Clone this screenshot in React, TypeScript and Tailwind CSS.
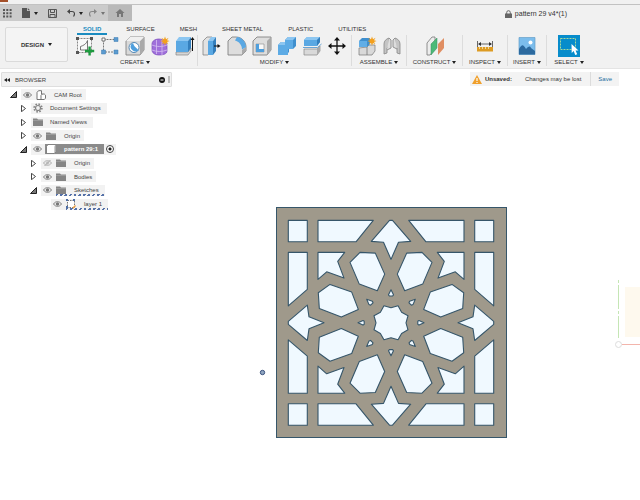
import React from "react";

type IconProps = { children: React.ReactNode; size?: string; box?: string };

function Svg({ children, size = "size-5", box = "0 0 20 20" }: IconProps) {
  return (
    <svg viewBox={box} className={`${size} shrink-0`} fill="none" aria-hidden="true">
      {children}
    </svg>
  );
}

const Caret = () => (
  <svg viewBox="0 0 4 3" className="h-[3px] w-1 shrink-0" aria-hidden="true">
    <path d="M0 0h4L2 3z" fill="#222" />
  </svg>
);

const Spark = ({ x, y }: { x: number; y: number }) => (
  <path
    transform={`translate(${x} ${y})`}
    d="M0-4.4 1-1.8 3.6-3.2 2-.8 4.6 0 2 .9 3.4 3.3 1 2 0 4.4-1 2-3.4 3.3-2 .9-4.6 0-2-.8-3.6-3.2-1-1.8z"
    fill="#f3a01e"
  />
);

const icons = {
  sketch: (
    <Svg>
      <path d="M2.5 2.5h14v14h-14z" stroke="#888" strokeDasharray="2 1" fill="#f8f8f8" />
      <path d="M5.5 14v-3.500C8.500 9.500 11.500 8 12.500 4.500V14z" stroke="#555" strokeWidth=".8" />
      <path d="M1 1h3v3H1zM15 1h3v3h-3zM1 15h3v3H1z" fill="#555" />
      <path d="M14.6 10.5v9M10 15h9.2" stroke="#1d9a3f" strokeWidth="2.4" />
    </Svg>
  ),
  form: (
    <Svg>
      <path d="M3.5 3.5h12M3.5 3.5v12M5 16h10" stroke="#777" strokeDasharray="2 1" />
      <path d="M2 2h3v3H2z" fill="#fff" stroke="#555" strokeWidth=".8" />
      <path d="M14 1.500h4v4h-4zM1.500 14h4v4h-4zM14 14h4v4h-4z" fill="#5b9bd0" stroke="#3f7db2" strokeWidth=".5" />
    </Svg>
  ),
  hole: (
    <Svg>
      <path d="M1 5 5 1h14v13l-4 5H1z" fill="#d9d9d9" stroke="#858585" strokeWidth=".9" />
      <path d="m15 5 4-4v13l-4 5z" fill="#aaa" />
      <path d="M1 5 5 1h14l-4 4z" fill="#f0f0f0" />
      <circle cx="9" cy="11.500" r="5" fill="#fff" stroke="#5488b5" />
      <path d="M6 8.500a5 5 0 0 0 7.500 6C12 12 9 11 8 7z" fill="#4f9fdd" />
    </Svg>
  ),
  sphere: (
    <Svg>
      <path d="M2 8c0-3 3-5 7-5s8 3 8 7v5c0 3-4 4-8 4s-7-2-7-5z" fill="#9f6fda" stroke="#7b4cbd" strokeWidth=".7" />
      <path d="M2 9c5 2 10 2 15 0M2 14c5 2 10 2 15 0M6.500 4v14M12 4v15" stroke="#d6bff1" strokeWidth=".8" />
      <Spark x={15} y={5} />
    </Svg>
  ),
  extrude: (
    <Svg>
      <path d="M1 16h12l3-4v3l-3 4H1z" fill="#d5d5d5" stroke="#777" strokeWidth=".6" />
      <path d="M1 5h12v11H1z" fill="#5aa8e3" />
      <path d="m1 5 3-4h12l-3 4z" fill="#8cc6f1" />
      <path d="m13 5 3-4v11l-3 4z" fill="#347fbd" />
      <path d="M17.500 3v12" stroke="#111" />
      <path d="m15.500 4 2-3 2 3z" fill="#111" />
    </Svg>
  ),
  press: (
    <Svg>
      <path d="M1 5 5 1h5v14l-4 4H1z" fill="#e2e2e2" stroke="#777" strokeWidth=".7" />
      <path d="M6 5h5v14H6z" fill="#5aa8e3" />
      <path d="m6 5 3-4h5l-3 4z" fill="#8cc6f1" />
      <path d="m11 5 3-4v14l-3 4z" fill="#347fbd" />
      <path d="M12 10h5" stroke="#111" />
      <path d="m15.500 8 3 2-3 2z" fill="#111" />
    </Svg>
  ),
  fillet: (
    <Svg>
      <path d="M1 19V5l4-4h4c6 0 10 5 10 10v4l-4 4z" fill="#ddd" stroke="#777" strokeWidth=".8" />
      <path d="M15 19v-5l4-3v4z" fill="#aaa" />
      <path d="M8 4.500 10 1c5 .500 9 5 9 10l-4 2.500C15 9 12 5.500 8 4.500z" fill="#5aa8e3" />
    </Svg>
  ),
  shell: (
    <Svg>
      <path d="M1 5 5 1h14v13l-4 5H1z" fill="#dedede" stroke="#777" strokeWidth=".8" />
      <path d="m15 5 4-4v13l-4 5z" fill="#aaa" />
      <path d="M4 8h8v8H4z" fill="#f9f9f9" stroke="#888" strokeWidth=".6" />
      <path d="M4 8h3v5h5v3H4z" fill="#4f9fdd" />
    </Svg>
  ),
  combine: (
    <Svg>
      <path d="m1 9 3-3h4V4l3-3h8v9l-3 3h-4v3l-3 3H1z" fill="#3f8fce" />
      <path d="M8 4h8v9h-5v6H1V9h7z" fill="#5dabe5" />
      <path d="m8 4 3-3h8l-3 3zM1 9l3-3h4v3z" fill="#8cc6f1" />
    </Svg>
  ),
  split: (
    <Svg>
      <path d="m2 4 3-3h13v5l-3 4H2z" fill="#5aa8e3" />
      <path d="m2 4 3-3h13l-3 3z" fill="#8cc6f1" />
      <path d="m15 4 3-3v5l-3 4z" fill="#347fbd" />
      <path d="M1 11.500h14.500l4-3.500" stroke="#5a9bd0" strokeWidth=".9" />
      <path d="M2 13h13l3-3v5l-3 4H2z" fill="#d9d9d9" stroke="#888" strokeWidth=".7" />
      <path d="m15 13 3-3v5l-3 4z" fill="#aaa" />
    </Svg>
  ),
  move: (
    <Svg>
      <path d="M10 3v14M3 10h14" stroke="#111" strokeWidth="1.300" />
      <path d="m7 4.500 3-3.500 3 3.500zM7 15.500l3 3.500 3-3.500zM4.500 7 1 10l3.500 3zM15.500 7l3.500 3-3.500 3z" fill="#111" />
    </Svg>
  ),
  component: (
    <Svg>
      <path d="m2 12 8-1 2-2h6v6l-3 4H2z" fill="#d9d9d9" stroke="#777" strokeWidth=".7" />
      <path d="M10 11v8" stroke="#777" strokeWidth=".8" />
      <path d="m2 5 3-3h8v6l-3 3H2z" fill="#3f8fce" />
      <path d="M2 5h8v6H2z" fill="#62aee6" />
      <Spark x={15} y={5} />
    </Svg>
  ),
  joint: (
    <Svg>
      <path d="M2 8c0-3 2-5 5-6v9l-2 1v5l-3 1zM18 8c0-3-2-5-5-6v9l2 1v5l3 1z" fill="#c4c4c4" stroke="#888" strokeWidth=".8" />
      <path d="M7 2 9 4v8l-4 2M13 2l-2 2v7l4 2" stroke="#888" strokeWidth=".9" fill="#ddd" />
    </Svg>
  ),
  plane: (
    <Svg>
      <path d="M2 7 7 1h3v12l-5 6H2z" fill="#ededed" stroke="#777" strokeWidth=".8" />
      <path d="m6 8 6-6v10l-6 7z" fill="#4cba78" stroke="#3a8e5c" strokeWidth=".5" />
      <path d="m13 8 6-6v10l-6 7z" fill="#e08e62" />
    </Svg>
  ),
  ruler: (
    <Svg>
      <path d="M2.500 5v6M17.500 5v6M4 8h12" stroke="#444" strokeWidth=".8" />
      <path d="M6 6 3 8l3 2zM14 6l3 2-3 2z" fill="#333" />
      <path d="M2 11h16v4.500H2z" fill="#dd9b23" />
      <path d="M4.500 11v2M7.500 11v2M10.500 11v2M13.500 11v2" stroke="#fff0c8" strokeWidth=".7" />
    </Svg>
  ),
  image: (
    <Svg>
      <path d="M2 1.500h16v17H2z" fill="#7cbdec" stroke="#669fc9" strokeWidth=".7" />
      <circle cx="13.500" cy="6.500" r="2" fill="#fff" />
      <path d="M2 13c3-5 4-5 7 0 3-3 4-3 5-1l4 3v3.500H2z" fill="#2c6a9f" />
    </Svg>
  ),
  select: (
    <Svg size="size-[22px]" box="0 0 22 22">
      <path d="M0 0h22v22H0z" fill="#078ccb" />
      <path d="M2.500 3.500h15v11h-15z" stroke="#a8d99c" strokeDasharray="2 1" />
      <path d="m13.500 9 .2 9 2-2 1.500 4 2-.8-1.600-3.700h2.900z" fill="#fff" />
    </Svg>
  ),
};

type Group = { name: string; width: string; tools: [string, React.ReactNode][] };

const groups: Group[] = [
  {
    name: "CREATE",
    width: "w-[125px]",
    tools: [["Create sketch", icons.sketch], ["Create form", icons.form], ["Hole", icons.hole], ["Sphere", icons.sphere], ["Extrude", icons.extrude]],
  },
  {
    name: "MODIFY",
    width: "w-[154px]",
    tools: [["Press pull", icons.press], ["Fillet", icons.fillet], ["Shell", icons.shell], ["Combine", icons.combine], ["Split", icons.split], ["Move", icons.move]],
  },
  { name: "ASSEMBLE", width: "w-[55px]", tools: [["New component", icons.component], ["Joint", icons.joint]] },
  { name: "CONSTRUCT", width: "w-[56px]", tools: [["Offset plane", icons.plane]] },
  { name: "INSPECT", width: "w-[45px]", tools: [["Measure", icons.ruler]] },
  { name: "INSERT", width: "w-[39px]", tools: [["Insert image", icons.image]] },
  { name: "SELECT", width: "w-[44px]", tools: [["Select", icons.select]] },
];

const tabs = ["SOLID", "SURFACE", "MESH", "SHEET METAL", "PLASTIC", "UTILITIES"];

function TitleBar() {
  return (
    <header>
      <div className="h-1 bg-[#f1f1f1]">
        <div className="h-[2px] w-2 bg-[#a4502a]" />
      </div>
      <div className="flex h-[17px] justify-between border-t border-[#c2c2c2] bg-[#f1f1f1]">
        <div className="flex items-center bg-[#cbcbcb] text-[#555]">
          <button aria-label="Data panel" className="ml-[3px]">
            <Svg size="size-[9px]" box="0 0 9 9">
              <path d="M0 0h2v2H0zM3.300 0h2v2h-2zM6.600 0h2v2h-2zM0 3.300h2v2H0zM3.300 3.300h2v2h-2zM6.600 3.300h2v2h-2zM0 6.600h2v2H0zM3.300 6.600h2v2h-2zM6.600 6.600h2v2h-2z" fill="#555" />
            </Svg>
          </button>
          <button aria-label="File" className="ml-[10px] flex items-center gap-1">
            <Svg size="h-[10px] w-2" box="0 0 8 10">
              <path d="M0 0h5v3h3v7H0zM5.800 0 8 2.200H5.800z" fill="#555" />
            </Svg>
            <Caret />
          </button>
          <button aria-label="Save document" className="ml-[10px]">
            <Svg size="size-[9px]" box="0 0 9 9">
              <path d="M.5.5h8v8h-8z" stroke="#555" />
              <path d="M2.500.5v3h4v-3M2 8.500v-3h5v3" stroke="#555" />
            </Svg>
          </button>
          <button aria-label="Undo" className="ml-[10px] flex items-center gap-1">
            <Svg size="size-2" box="0 0 8 8">
              <path d="M2 2.500h3c3 0 3 3 1.500 5" stroke="#444" strokeWidth="1.200" />
              <path d="M3 0v5L0 2.500z" fill="#444" />
            </Svg>
            <Caret />
          </button>
          <button aria-label="Redo" className="ml-[6px] flex items-center gap-1 opacity-50">
            <Svg size="size-2" box="0 0 8 8">
              <path d="M6 2.500H3c-3 0-3 3-1.500 5" stroke="#444" strokeWidth="1.200" />
              <path d="M5 0v5l3-2.500z" fill="#444" />
            </Svg>
            <Caret />
          </button>
          <button aria-label="Home" className="ml-[3px] flex h-full w-6 items-center justify-center bg-[#b9b9b9]">
            <Svg size="size-[10px]" box="0 0 10 10">
              <path d="M5 1 .5 5H2v4h2V6h2v3h2V5h1.500z" fill="#777" />
            </Svg>
          </button>
        </div>
        <h1 className="flex items-center gap-[3px] pt-px pr-[73px] text-[7px] leading-[8px] text-[#333]">
          <Svg size="h-2 w-[7px]" box="0 0 7 8">
            <path d="M1.700 4V2.500a1.800 1.800 0 0 1 3.600 0V4" stroke="#666" />
            <path d="M0 3.500h7V8H0z" fill="#666" />
          </Svg>
          pattern 29 v4*(1)
        </h1>
      </div>
    </header>
  );
}

function Ribbon() {
  return (
    <div className="flex border-b border-[#e4e4e4] bg-[#f1f1f1] text-[#333]">
      <div className="w-[73px] shrink-0 pt-[6px] pl-[5px]">
        <button className="flex h-[35px] w-[63px] items-center justify-center gap-1 rounded-[2px] border border-[#dadada] bg-[#f4f4f4] font-bold">
          DESIGN <Caret />
        </button>
      </div>
      <div className="min-w-0 flex-1">
        <nav className="flex gap-[25px] pl-1">
          {tabs.map((t, i) => (
            <button
              key={t}
              className={
                i === 0
                  ? "-mr-[6px] border-b-2 border-[#1a8bc0] px-[6px] pt-1 font-bold text-[#1a8bc0]"
                  : "border-b-2 border-transparent pt-1 whitespace-nowrap"
              }
            >
              {t}
            </button>
          ))}
        </nav>
        <div className="flex pb-[2px]">
          {groups.map((g) => (
            <section key={g.name} className={`${g.width} flex shrink-0 flex-col items-center border-r border-[#dcdcdc] last:border-r-0`}>
              <div className="flex h-[22px] items-center justify-center gap-[5px]">
                {g.tools.map(([name, icon]) => (
                  <button key={name} aria-label={name} className="shrink-0">
                    {icon}
                  </button>
                ))}
              </div>
              <button className="mt-px flex items-center gap-[2px]">
                {g.name} <Caret />
              </button>
            </section>
          ))}
        </div>
      </div>
    </div>
  );
}

const Eye = ({ off = false }: { off?: boolean }) => (
  <button aria-label="Toggle visibility">
    <Svg size="h-2 w-[9px]" box="0 0 9 8">
      <path d="M.5 4C2.500.8 6.500.8 8.500 4 6.500 7.200 2.500 7.200.5 4z" stroke={off ? "#b5b5b5" : "#858585"} fill="#e8e8e8" />
      <circle cx="4.500" cy="4" r="1.700" fill={off ? "#c5c5c5" : "#777"} />
      {off && <path d="M1.500 7 7.500 1" stroke="#aaa" />}
    </Svg>
  </button>
);

const Folder = () => (
  <Svg size="h-2 w-[10px]" box="0 0 10 8">
    <path d="M0 .5h4l1 1h5V8H0z" fill="#858585" />
    <path d="M0 2.500h10" stroke="#aaa" strokeWidth=".6" />
  </Svg>
);

const Gear = () => (
  <Svg size="size-[10px]" box="0 0 10 10">
    <circle cx="5" cy="5" r="3.900" stroke="#858585" strokeWidth="1.600" strokeDasharray="1.600 1.460" />
    <circle cx="5" cy="5" r="2.500" stroke="#858585" strokeWidth="1.200" />
  </Svg>
);

const Root = () => (
  <Svg size="size-[10px]" box="0 0 10 10">
    <path d="M1 2.500 2.500.7h3V4h2.800L9.500 5.200v3L8.300 9.500H1zM5 9.500V5.500L6.300 4" stroke="#666" strokeWidth=".9" fill="#fff" />
  </Svg>
);

const Cube = () => (
  <Svg size="size-[10px]" box="0 0 10 10">
    <path d="M.5 2.500 2 .5h7.500v7L8 9.500H.5z" fill="#fff" stroke="#666" strokeWidth=".7" />
    <path d="M8 2.500v7l1.500-2v-7z" fill="#ccc" />
  </Svg>
);

const SketchSmall = () => (
  <Svg size="size-[10px]" box="0 0 10 10">
    <path d="M1.500 1.500h7v7h-7z" stroke="#777" strokeDasharray="1.500 1" fill="#fff" />
    <path d="M0 0h2v2H0zM7 0h2v2H7zM0 7h2v2H0z" fill="#4d6ea5" />
    <path d="m6 9 3-3 1 1-3 3z" fill="#eb9c3d" />
  </Svg>
);

type Node = {
  label: string;
  indent: string;
  state?: "open" | "closed";
  eye?: "on" | "off";
  icon: React.ReactNode;
  kind?: "active" | "sketch";
};

const nodes: Node[] = [
  { label: "CAM Root", indent: "pl-[10px]", state: "open", eye: "on", icon: <Root /> },
  { label: "Document Settings", indent: "pl-5", state: "closed", icon: <Gear /> },
  { label: "Named Views", indent: "pl-5", state: "closed", icon: <Folder /> },
  { label: "Origin", indent: "pl-5", state: "closed", eye: "on", icon: <Folder /> },
  { label: "pattern 29:1", indent: "pl-5", state: "open", eye: "on", icon: <Cube />, kind: "active" },
  { label: "Origin", indent: "pl-[30px]", state: "closed", eye: "off", icon: <Folder /> },
  { label: "Bodies", indent: "pl-[30px]", state: "closed", eye: "on", icon: <Folder /> },
  { label: "Sketches", indent: "pl-[30px]", state: "open", eye: "on", icon: <Folder />, kind: "sketch" },
  { label: "layer 1", indent: "pl-[40px]", eye: "on", icon: <SketchSmall />, kind: "sketch" },
];

function TreeRow({ node }: { node: Node }) {
  const active = node.kind === "active";
  return (
    <li className={`${node.indent} flex items-center gap-1`}>
      {node.state ? (
        <button aria-label={`Toggle ${node.label}`}>
          <Svg size="size-[7px]" box="0 0 7 7">
            {node.state === "open" ? (
              <path d="M.5 6.500h6v-6z" fill="#777" stroke="#222" />
            ) : (
              <path d="M1.500.3v6.400L5.500 3.500z" stroke="#333" strokeWidth=".9" fill="#fff" />
            )}
          </Svg>
        </button>
      ) : (
        <span className="w-[7px]" />
      )}
      <div className="flex h-[11px] items-center bg-[#f2f2f2] pl-[2px]">
        {node.eye && <Eye off={node.eye === "off"} />}
        <div
          className={
            active
              ? "ml-[3px] flex h-[10px] items-center gap-2 bg-[#8b8b8b] pr-[6px] pl-px font-bold text-white"
              : node.kind === "sketch"
                ? "relative ml-1 flex h-[11px] items-center gap-2 pr-[6px]"
                : node.eye
                  ? "ml-1 flex items-center gap-2 pr-1"
                  : "flex items-center gap-[7px] pr-[6px]"
          }
        >
          {node.icon}
          <span>{node.label}</span>
          {node.kind === "sketch" && (
            <span className="absolute inset-x-0 bottom-0 h-[2px] bg-[repeating-linear-gradient(120deg,#5571a8_0_2px,transparent_2px_4px)]" />
          )}
        </div>
        {active && (
          <label className="flex items-center px-[2px]">
            <input
              type="radio"
              name="active-component"
              defaultChecked
              aria-label="Activate component"
              className="size-2 appearance-none rounded-full border border-[#444] bg-[radial-gradient(circle,#222_0_1px,#fff_2px)]"
            />
          </label>
        )}
      </div>
    </li>
  );
}

function Browser() {
  return (
    <aside className="w-[172px] shrink-0 text-[#444]">
      <div className="ml-px flex h-[15px] items-center rounded-[1px] border border-[#dedede] bg-[#f1f1f1] pl-[2px]">
        <button aria-label="Collapse browser">
          <Svg size="h-1 w-[6px]" box="0 0 6 4">
            <path d="M3 0v4L0 2zM6 0v4L3 2z" fill="#222" />
          </Svg>
        </button>
        <h2 className="ml-[5px] flex-1">BROWSER</h2>
        <button aria-label="Minimize">
          <Svg size="size-[6px]" box="0 0 6 6">
            <circle cx="3" cy="3" r="3" fill="#111" />
            <path d="M1.500 3h3" stroke="#fff" />
          </Svg>
        </button>
        <div className="mr-px ml-[3px] h-[7px] w-[2px] border-x border-[#bbb]" />
      </div>
      <ul className="mt-px grid h-[123px] grid-rows-9">
        {nodes.map((n, i) => (
          <TreeRow key={i} node={n} />
        ))}
      </ul>
    </aside>
  );
}

// Openings of one quadrant, measured from the centre of the panel.
const quadrant = [
  "-102.7,-102.4 -83.7,-102.4 -83.7,-81 -102.7,-81",
  "-73,-102.4 -17.7,-102.4 -35,-81 -73,-81",
  "-102.7,-70.4 -83.7,-70.4 -83.7,-33.4 -102.7,-17",
  "-73,-70.4 -46.3,-70.4 -53.3,-61.4 -47,-44.7 -64.3,-51 -73,-43.4",
  "-31,-70.4 -15.7,-69.7 -6.3,-48.7 -13.7,-32 -31.7,-38.7 -41,-60.4",
  "-61,-38.4 -39.3,-30.7 -32.7,-13.4 -49.7,-5.7 -71.7,-14.4 -72.7,-30",
  "-24.3,-23.6 -18.6,-21.6 -18,-20 -20.4,-17.6 -22,-18.2",
];

const axial = [
  "-1.500,-102.4 1.500,-102.4 19.7,-81.4 7.5,-80.6 0,-63.4 -7.5,-80.6 -19.7,-81.4",
  "-102.7,-1.500 -102.7,1.500 -83.7,17.7 -82,6 -67,0 -82,-6 -83.7,-17.7",
  "0,-33 2.500,-28 1.600,-26.8 -1.600,-26.8 -2.500,-28",
  "-33,0 -28,-2.300 -26.8,-1.500 -26.8,1.500 -28,2.300",
];

const rosette = Array.from({ length: 16 }, (_, i) => {
  const a = (i * Math.PI) / 8;
  const r = i % 2 ? 18.4 : 15;
  return `${(r * Math.cos(a)).toFixed(2)},${(r * Math.sin(a)).toFixed(2)}`;
}).join(" ");

function Panel() {
  return (
    <svg viewBox="276 207 231 231" className="absolute top-[138px] left-[276px] size-[231px]" role="img" aria-label="pattern 29">
      <rect x="276.500" y="207.500" width="230" height="230" fill="#9f998b" stroke="#36566a" />
      <g transform="translate(391 322.8)" fill="#f0f9ff" stroke="#36566a" strokeWidth="1.100" strokeLinejoin="round">
        {["1 1", "-1 1", "1 -1", "-1 -1"].map((s) => (
          <g key={s} transform={`scale(${s})`}>
            {quadrant.map((p) => (
              <polygon key={p} points={p} />
            ))}
          </g>
        ))}
        {["1 1", "-1 -1"].map((s) => (
          <g key={s} transform={`scale(${s})`}>
            {axial.map((p) => (
              <polygon key={p} points={p} />
            ))}
          </g>
        ))}
        <polygon points={rosette} />
      </g>
    </svg>
  );
}

export default function App() {
  return (
    <div className="flex min-h-screen flex-col overflow-hidden bg-white font-['Liberation_Sans',Arial,sans-serif] text-[6px] leading-[8px]">
      <TitleBar />
      <Ribbon />
      <main className="relative flex flex-1 items-start justify-between pt-[3px]">
        <Browser />
        <div role="status" className="mr-[21px] flex h-[14px] items-center bg-[#f3f3f3] text-[#333]">
          <Svg size="ml-[2px] h-[9px] w-[10px]" box="0 0 10 9">
            <path d="M5 0 10 9H0z" fill="#f0a02c" />
            <path d="M5 3v3M5 7v1" stroke="#fff" strokeWidth="1.200" />
          </Svg>
          <strong className="ml-[3px]">Unsaved:</strong>
          <span className="ml-[13px]">Changes may be lost</span>
          <button className="ml-[9px] h-full border-l border-[#dcdcdc] px-[7px] text-[#1c6f9f]">Save</button>
        </div>
        <Panel />
        <Svg size="absolute top-[300px] left-[259px] size-[7px]" box="0 0 7 7">
          <circle cx="3.500" cy="3.500" r="2.200" fill="#8fa5c0" stroke="#3c5480" />
        </Svg>
        <Svg size="absolute top-[209px] right-0 h-[72px] w-[26px]" box="0 0 26 72">
          <path d="M11 9h15v50H11z" fill="#fef9ee" />
          <path d="M4.500 2v58" stroke="#c5e6b5" strokeDasharray="3 2 24 2" />
          <path d="M8 66.500h18" stroke="#f3b5ac" />
          <circle cx="4.500" cy="66.500" r="3" fill="#fff" stroke="#ddd" />
        </Svg>
      </main>
    </div>
  );
}
